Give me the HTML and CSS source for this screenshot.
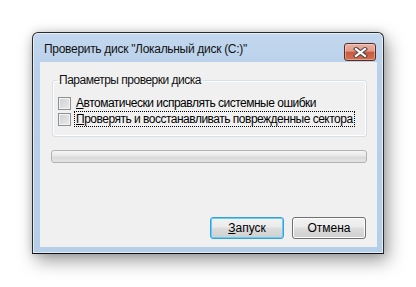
FILE: index.html
```html
<!DOCTYPE html>
<html lang="ru">
<head>
    <meta charset="UTF-8">
    <title>Проверить диск</title>
    <link rel="stylesheet" href="styles.css">
</head>
<body>
    <div class="window">
        <div class="titlebar">
            <span class="title">Проверить диск "Локальный диск (C:)"</span>
            <button class="close" title="Закрыть">
                <svg width="15" height="11" viewBox="0 0 15 11">
                    <path d="M3 2 L12 9 M12 2 L3 9" stroke="#54474a" stroke-width="4.2" stroke-linecap="square"/>
                    <path d="M3 2 L12 9 M12 2 L3 9" stroke="#ffffff" stroke-width="2.2" stroke-linecap="square"/>
                </svg>
            </button>
        </div>
        <div class="client">
            <fieldset class="group">
                <legend>Параметры проверки диска</legend>
                <label class="check">
                    <span class="box"></span>
                    <span class="label"><u>А</u>втоматически исправлять системные ошибки</span>
                </label>
                <label class="check">
                    <span class="box"></span>
                    <span class="label focused"><u>П</u>роверять и восстанавливать поврежденные сектора</span>
                </label>
            </fieldset>
            <div class="progress"></div>
            <div class="buttons">
                <button class="btn default"><u>З</u>апуск</button>
                <button class="btn">Отмена</button>
            </div>
        </div>
    </div>
</body>
</html>
```

FILE: styles.css
```css
body {
    margin: 0;
    padding: 32px;
    background: #ffffff;
    font-family: "Liberation Sans", Arial, sans-serif;
    font-size: 12px;
    color: #000;
}

.window {
    width: 352px;
    box-sizing: border-box;
    border: 1px solid #2a2a2a;
    border-bottom-color: #111;
    border-radius: 6px 6px 0 0;
    background: linear-gradient(#c3d8ee, #b8d0ea 40px, #b6cfe9);
    box-shadow: 4px 7px 18px rgba(0, 0, 0, 0.38), 0 0 8px rgba(0, 0, 0, 0.15), inset 0 0 0 1px rgba(255, 255, 255, 0.6);
    padding: 0 6px 6px 7px;
}

.titlebar {
    height: 29px;
    display: flex;
    align-items: center;
    justify-content: space-between;
}

.title {
    margin-left: 4px;
    margin-top: 3px;
    color: #111;
    letter-spacing: -0.3px;
    white-space: nowrap;
}

.close {
    width: 32px;
    height: 18px;
    margin-top: 9px;
    margin-right: 1px;
    padding: 0;
    border: 1px solid #5b2a22;
    border-radius: 3px;
    background: linear-gradient(#eab1a3, #e09a88 45%, #c75a3c 50%, #d46e4f);
    box-shadow: inset 0 0 0 1px rgba(255, 255, 255, 0.35);
    display: flex;
    align-items: center;
    justify-content: center;
}

.client {
    background: #f0f0f0;
    height: 185px;
    padding: 11px 10px 0 12px;
    box-sizing: border-box;
    display: flex;
    flex-direction: column;
    letter-spacing: -0.5px;
}

.group {
    margin: 0;
    padding: 8px 0 9px 5px;
    border: 1px solid #d5dfe5;
    border-radius: 3px;
    box-shadow: inset 0 0 0 1px #fff;
}

.group legend {
    padding: 0 2px;
    margin-left: -1px;
    line-height: 14px;
    color: #111;
}

.check {
    display: flex;
    align-items: center;
    height: 16px;
}

.box {
    width: 11px;
    height: 11px;
    border: 1px solid #8e8f8f;
    background: linear-gradient(135deg, #cfd2d6, #e8e8e8);
    box-shadow: inset 0 0 0 1px #f4f4f4;
    margin-right: 4px;
}

.label {
    padding: 0 1px;
    line-height: 14px;
    white-space: nowrap;
}

.focused {
    outline: 1px dotted #000;
}

.progress {
    margin-top: 13px;
    height: 11px;
    border: 1px solid #b2b2b2;
    border-radius: 3px;
    background: linear-gradient(#f6f6f6, #e8e8e8 45%, #dadada 55%, #e4e4e4);
    margin-left: -1px;
}

.buttons {
    margin-top: auto;
    margin-bottom: 8px;
    display: flex;
    justify-content: flex-end;
    gap: 8px;
    padding-right: 1px;
}

.btn {
    width: 74px;
    height: 22px;
    font-family: inherit;
    font-size: 12px;
    letter-spacing: 0;
    color: #000;
    border: 1px solid #707070;
    border-radius: 3px;
    background: linear-gradient(#f2f2f2, #ebebeb 45%, #dddddd 50%, #cfcfcf);
    box-shadow: inset 0 0 0 1px #fcfcfc;
    padding: 0;
}

.btn.default {
    border-color: #3c9fd9;
    box-shadow: inset 0 0 0 1px #62d0f5;
}
```
